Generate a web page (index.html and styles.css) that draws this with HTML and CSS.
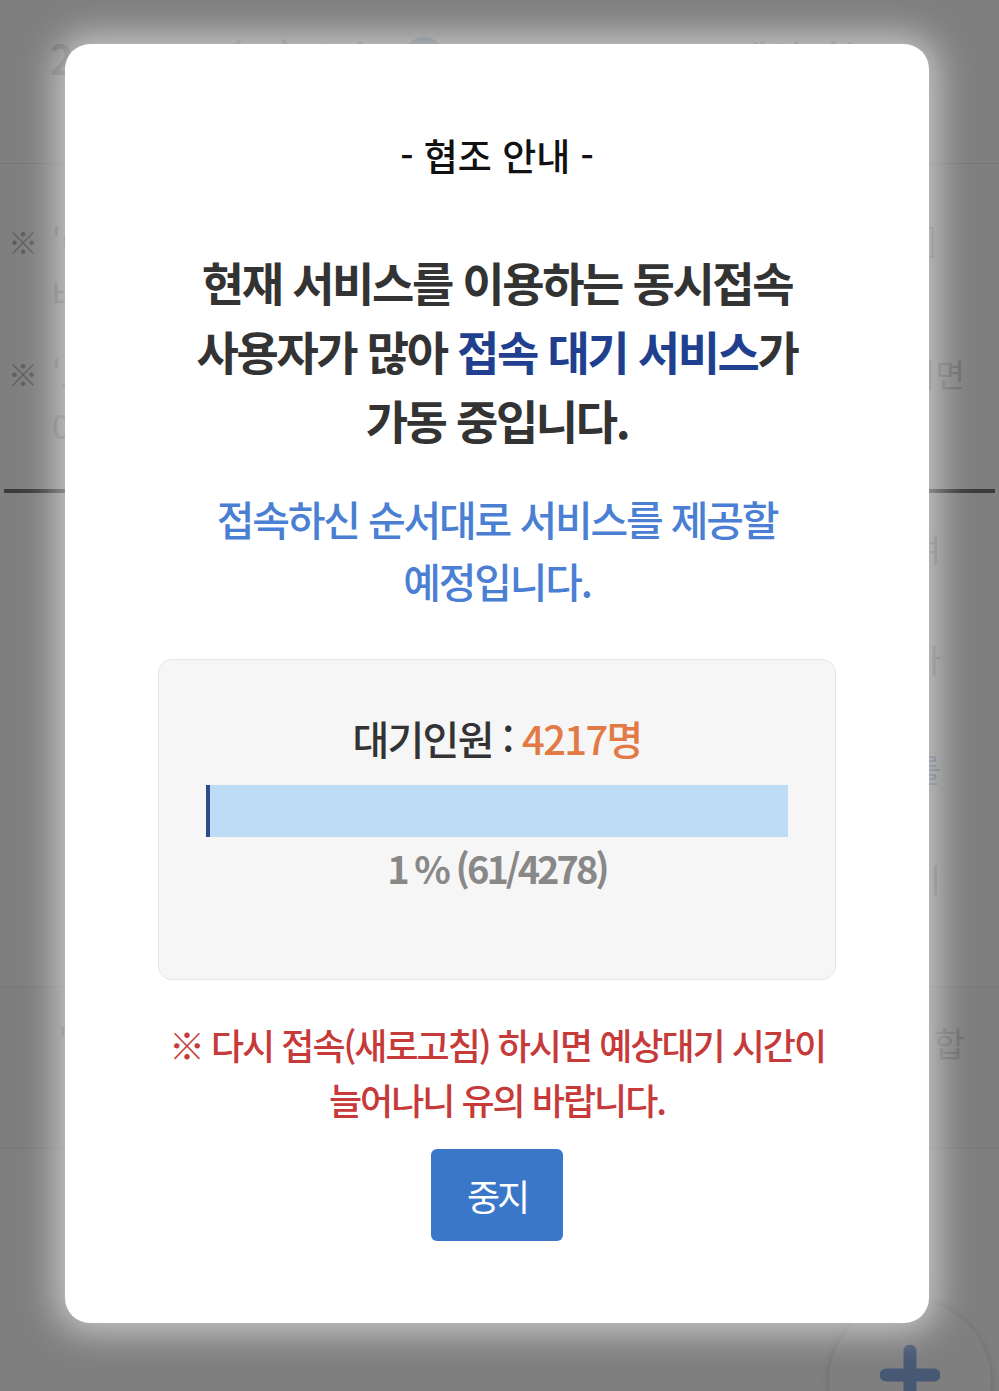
FILE: index.html
```html
<!DOCTYPE html>
<html lang="ko">
<head>
<meta charset="utf-8">
<title>협조 안내</title>
<link rel="stylesheet" href="styles.css">
</head>
<body>
<div class="page">
  <header class="slot">
    <div class="slot-row">
      <span class="slot-date">2023.10</span>
      <span class="slot-day">(토) 오후</span>
      <span class="slot-dot"></span>
      <span class="slot-time">17:00 ~ 19:00 예약가능</span>
    </div>
  </header>

  <section class="notes">
    <div class="note-line"><span class="note-mark">※</span><span class="note-text">'이용권 예약' 버튼을 누르시면 예약 화면이</span><span class="note-end end-a">[예약]</span></div>
    <div class="note-line indent"><span class="note-text">바로 표시됩니다.</span></div>
    <div class="note-line gap"><span class="note-mark">※</span><span class="note-text">'조회' 메뉴에서 예약 내역을 확인하실 수 있으며 취소하</span><span class="note-end end-b">시려면</span></div>
    <div class="note-line indent"><span class="note-text">0시 이전에 취소해 주세요.</span></div>
  </section>

  <div class="rule"></div>

  <section class="content">
    <div class="content-row"><span>예약 안내 사항을 확인하여</span></div>
    <div class="content-row"><span>이용에 참고하시기 바랍니다</span></div>
    <div class="content-row"><span class="link">자세한 내용은 이용 안내를</span></div>
    <div class="content-row"><span>확인하시기 바랍니다 이</span></div>
  </section>

  <section class="summary">
    <div class="summary-row"><span class="summary-left">'</span><span class="summary-right">합</span></div>
  </section>

  <button class="fab" type="button" aria-label="추가">
    <svg viewBox="0 0 60 60" width="60" height="60" aria-hidden="true">
      <path d="M30 6 V54 M6 30 H54" stroke="#8fb0e8" stroke-width="13" stroke-linecap="round"/>
    </svg>
  </button>
</div>

<div class="overlay">
  <div class="modal" role="dialog" aria-labelledby="modal-title">
    <h2 class="modal-title" id="modal-title">- 협조 안내 -</h2>
    <p class="headline">현재 서비스를 이용하는 동시접속<br>사용자가 많아 <span class="accent">접속 대기 서비스</span>가<br>가동 중입니다.</p>
    <p class="subline">접속하신 순서대로 서비스를 제공할<br>예정입니다.</p>

    <div class="queue-box">
      <p class="queue-count">대기인원 : <span class="queue-num">4217명</span></p>
      <div class="bar"><div class="bar-fill" style="width:1%"></div></div>
      <p class="queue-pct">1 % (61/4278)</p>
    </div>

    <p class="warning">※ 다시 접속(새로고침) 하시면 예상대기 시간이<br>늘어나니 유의 바랍니다.</p>

    <button class="stop-btn" type="button">중지</button>
  </div>
</div>
</body>
</html>
```

FILE: styles.css
```css
* {
  box-sizing: border-box;
  margin: 0;
  padding: 0;
}

html,
body {
  width: 999px;
  height: 1391px;
  overflow: hidden;
}

body {
  position: relative;
  background: #ffffff;
  font-family: "Noto Sans CJK KR", "Noto Sans", sans-serif;
}

/* ---------- background page ---------- */
.page {
  position: relative;
  height: 1391px;
  overflow: hidden;
  color: #d6d6d6;
}

.slot {
  height: 164px;
  border-bottom: 1px solid #ececec;
  padding-top: 30px;
}

.slot-row {
  display: flex;
  align-items: center;
  gap: 24px;
  padding-left: 50px;
  font-size: 40px;
  line-height: 56px;
  font-weight: 700;
  white-space: nowrap;
}

.slot-day {
  font-weight: 500;
}

.slot-dot {
  width: 42px;
  height: 42px;
  border-radius: 50%;
  background: #c5dcf2;
}

.slot-time {
  font-weight: 500;
}

.notes {
  height: 325px;
  padding-top: 51px;
  font-size: 32px;
  line-height: 52px;
}

.note-line {
  display: flex;
  align-items: center;
  white-space: nowrap;
  padding-left: 8px;
}

.note-line.gap {
  margin-top: 28px;
}

.note-line.indent {
  padding-left: 52px;
}

.note-mark {
  width: 44px;
  color: #bcbcbc;
  font-size: 30px;
}

.note-text {
  flex: 1;
}

.note-end.end-a {
  padding-right: 62px;
}

.note-end.end-b {
  padding-right: 34px;
}

.rule {
  height: 4px;
  margin: 0 4px;
  background: #767676;
}

.content {
  height: 494px;
  border-bottom: 1px solid #ececec;
}

.content-row {
  height: 110px;
  display: flex;
  align-items: center;
  justify-content: flex-end;
  padding-right: 58px;
  font-size: 32px;
  white-space: nowrap;
}

.content-row .link {
  color: #aec3ee;
}

.summary {
  height: 162px;
  border-bottom: 1px solid #ececec;
  background: #fbfbfb;
  padding-top: 30px;
}

.summary-row {
  display: flex;
  justify-content: space-between;
  padding: 0 34px 0 58px;
  font-size: 34px;
  line-height: 52px;
}

.fab {
  position: absolute;
  left: 829px;
  top: 1300px;
  width: 162px;
  height: 162px;
  border-radius: 50%;
  border: none;
  background: #ffffff;
  box-shadow: 0 2px 10px rgba(0, 0, 0, 0.18);
  display: flex;
  justify-content: center;
  padding-top: 45px;
}

/* ---------- overlay & modal ---------- */
.overlay {
  position: absolute;
  inset: 0;
  background: rgba(0, 0, 0, 0.5);
  display: flex;
  justify-content: flex-start;
  align-items: flex-start;
  padding: 44px 0 0 65px;
}

.modal {
  width: 864px;
  background: #ffffff;
  border-radius: 25px;
  box-shadow: 0 0 34px 10px rgba(255, 255, 255, 0.55);
  display: flex;
  flex-direction: column;
  align-items: center;
  text-align: center;
  padding: 86px 0 82px;
}

.modal-title {
  font-size: 37px;
  line-height: 50px;
  font-weight: 500;
  color: #111111;
}

.headline {
  margin-top: 67px;
  font-size: 46px;
  line-height: 69px;
  font-weight: 700;
  letter-spacing: -2.4px;
  color: #333333;
}

.headline .accent {
  color: #213f8f;
}

.subline {
  margin-top: 33px;
  font-size: 41px;
  line-height: 62px;
  font-weight: 500;
  letter-spacing: -2.2px;
  color: #4a7fd4;
}

.queue-box {
  margin-top: 48px;
  width: 678px;
  padding: 50px 47px 86px;
  background: #f6f6f6;
  border: 1px solid #e6e6e6;
  border-radius: 14px;
}

.queue-count {
  font-size: 40px;
  line-height: 56px;
  font-weight: 500;
  letter-spacing: -1.7px;
  color: #333333;
}

.queue-num {
  color: #e27a45;
}

.bar {
  margin-top: 19px;
  height: 52px;
  background: #bfdcf6;
  display: flex;
}

.bar-fill {
  background: #2d4a8b;
  max-width: 4px;
}

.queue-pct {
  margin-top: 6px;
  font-size: 38px;
  line-height: 50px;
  font-weight: 700;
  letter-spacing: -3px;
  color: #888888;
}

.warning {
  margin-top: 37px;
  font-size: 36px;
  line-height: 55px;
  font-weight: 500;
  letter-spacing: -2px;
  color: #c63a3a;
}

.stop-btn {
  margin-top: 22px;
  width: 132px;
  height: 92px;
  border: none;
  border-radius: 6px;
  background: #3b77c8;
  color: #ffffff;
  font-family: "Noto Sans CJK KR", "Noto Sans", sans-serif;
  font-size: 36px;
  font-weight: 400;
  letter-spacing: -3px;
}
```
